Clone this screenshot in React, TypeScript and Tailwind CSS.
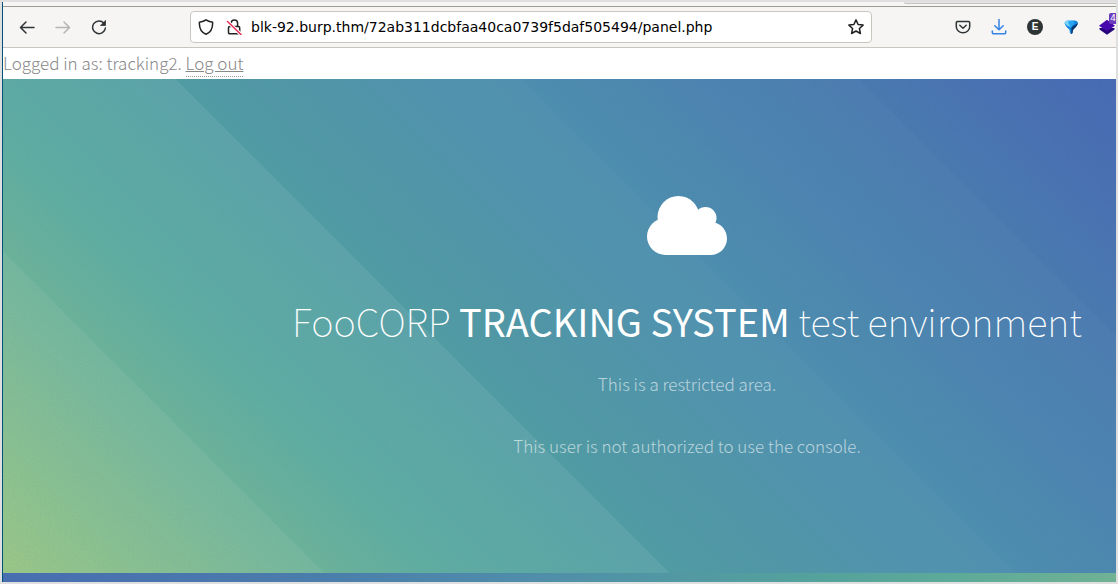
import React from 'react'

const iconProps = {
  width: 16,
  height: 16,
  viewBox: '0 0 16 16',
  fill: 'none',
  stroke: 'currentColor',
  strokeWidth: 1.5,
  strokeLinecap: 'round' as const,
  strokeLinejoin: 'round' as const,
  'aria-hidden': true,
}

function IconButton({ label, className = '', children }: { label: string; className?: string; children: React.ReactNode }) {
  return (
    <button type="button" aria-label={label} className={`h-4 w-4 shrink-0 ${className}`}>
      {children}
    </button>
  )
}

function Toolbar() {
  return (
    <nav aria-label="Browser toolbar" className="flex h-[42px] items-center border-t border-b border-t-[#9b9b91] border-b-[#c9c6bf] bg-[#f6f5f4] pl-4 text-[#2e3436]">
      <div className="flex items-center gap-5">
        <IconButton label="Back">
          <svg {...iconProps}><path d="M15 8.5H1.8M7 3L1.5 8.5L7 14" /></svg>
        </IconButton>
        <IconButton label="Forward" className="text-[#b4b5b4]">
          <svg {...iconProps}><path d="M1 8.5h13.2M9 3l5.5 5.5L9 14" /></svg>
        </IconButton>
        <IconButton label="Reload">
          <svg {...iconProps}>
            <path d="M12.8 4A6.4 6.4 0 1 0 14.4 9" />
            <path d="M14.5 1.8v4.7H9.8z" fill="currentColor" strokeWidth={0.8} />
          </svg>
        </IconButton>
      </div>

      {/* Address bar */}
      <div className="mr-[83px] ml-[83px] flex h-8 min-w-0 flex-1 items-center rounded-[4px] border border-[#c9c6bf] bg-white px-[7px] text-[#222]">
        <IconButton label="Tracking protection">
          <svg {...iconProps}><path d="M8 .8C6.500 2 4 2.800 1.400 3.200c-.3 5.300 1.200 9.800 6.600 12 5.400-2.200 6.900-6.700 6.600-12C12 2.800 9.500 2 8 .8z" /></svg>
        </IconButton>
        <IconButton label="Connection is not secure" className="ml-3">
          <svg {...iconProps}>
            <path d="M5.200 7V4.300a3.200 3.200 0 0 1 6.400 0V7M3.700 7.500h8.800a1.200 1.200 0 0 1 1.200 1.200v4.800a1.200 1.200 0 0 1-1.200 1.200H3.700a1.200 1.200 0 0 1-1.200-1.200V8.700a1.200 1.200 0 0 1 1.200-1.200z" />
            <path d="M1.500 2.500L15 15.500" stroke="#fff" strokeWidth={3.500} />
            <path d="M1.500 2.500L15 15.500" stroke="#ee2a55" />
          </svg>
        </IconButton>
        <input
          type="text"
          aria-label="Address"
          defaultValue="blk-92.burp.thm/72ab311dcbfaa40ca0739f5daf505494/panel.php"
          className="ml-[9px] h-6 min-w-0 flex-1 bg-transparent font-['DejaVu_Sans',sans-serif] text-[14px] font-normal text-black outline-none"
        />
        <IconButton label="Bookmark this page">
          <svg {...iconProps}><path d="M8 .9l2.100 4.600 5 .6-3.700 3.400 1 5L8 12l-4.400 2.500 1-5L.9 6.100l5-.6z" /></svg>
        </IconButton>
      </div>

      {/* Extensions */}
      <div className="flex items-center gap-5">
        <IconButton label="Save to Pocket">
          <svg {...iconProps}>
            <path d="M2.500 2.500h11a1.200 1.200 0 0 1 1.200 1.200v4A6.700 6 0 0 1 1.300 7.700v-4a1.200 1.200 0 0 1 1.200-1.200z" />
            <path d="M4.800 6.200L8 9.200l3.200-3" />
          </svg>
        </IconButton>
        <IconButton label="Downloads" className="text-[#3584e4]">
          <svg {...iconProps}><path d="M8 .5v10M3.800 6.700L8 10.800l4.200-4.100M1.300 12v1.500a1.200 1.200 0 0 0 1.200 1.200h11a1.200 1.200 0 0 0 1.200-1.200V12" /></svg>
        </IconButton>
        <button type="button" aria-label="Extension E" className="flex h-4 w-4 shrink-0 items-center justify-center rounded-full bg-[#2e3436] font-['Liberation_Sans',sans-serif] text-[10px] leading-4 font-bold text-white">
          E
        </button>
        <IconButton label="Extension">
          <svg width="16" height="16" viewBox="0 0 16 16" aria-hidden="true">
            <path d="M1.500 4Q2.500 1.500 4.500 1.500h7.500Q14.500 1.500 15 4C14.500 7 11.500 9 10 11l-.5 3Q8.300 15.800 7 14l-.5-3C5 9 2 7 1.500 4z" fill="#1487dd" />
            <path d="M1.500 4Q2.500 1.500 4.500 1.500H9L7.500 8 4 6.500z" fill="#7ad4fb" />
            <path d="M15 4C14.500 7 11.500 9 10 11l-.5 3q-.6.900-1.200 1V8z" fill="#0a3570" />
            <path d="M5 3.500L8 9l3.800-5.500L9.500 2H6.500z" fill="#27a5f2" />
          </svg>
        </IconButton>
        <button type="button" aria-label="Wappalyzer, 4 detected" className="relative h-4 w-[17px] shrink-0">
          <svg width="17" height="16" viewBox="0 0 17 16" aria-hidden="true">
            <path d="M.5 9v1.500L8 15.700 15.500 10.500V9z" fill="#27057a" />
            <path d="M8 .8L16 6.800 8 12 0 6.800z" fill="#4608ad" />
          </svg>
          <span className="absolute -top-[6px] right-0 rounded-l-[2px] bg-[#6b3bbd] pl-px font-['DejaVu_Sans',sans-serif] text-[9px] leading-[11px] font-normal text-white">
            4
          </span>
        </button>
      </div>
    </nav>
  )
}

// Fine paper-like texture laid over the gradients
function Grain() {
  return (
    <svg className="absolute inset-0 h-full w-full opacity-15" aria-hidden="true">
      <filter id="grain">
        <feTurbulence type="fractalNoise" baseFrequency="0.6" numOctaves="2" seed="4" />
        <feColorMatrix values="0 0 0 0 0.1  0 0 0 0 0.3  0 0 0 0 0.4  1.6 0 0 0 -0.5" />
      </filter>
      <rect width="100%" height="100%" filter="url(#grain)" />
    </svg>
  )
}

function Cloud() {
  return (
    <svg className="h-[59px] w-20" viewBox="0 0 80 59" fill="#fff" aria-hidden="true">
      <circle cx="31.500" cy="21" r="21" />
      <circle cx="58.500" cy="22" r="11" />
      <circle cx="18.500" cy="40.500" r="18.500" />
      <circle cx="63.500" cy="42.500" r="16.500" />
      <path d="M18.500 22H60l4 12v25H18.500z" />
    </svg>
  )
}

export default function App() {
  return (
    <div className="min-h-screen bg-[#dfdfdf] p-[2px]">
      <div className="flex min-h-[calc(100vh-4px)] flex-col overflow-hidden border-l border-[#00527a] bg-white font-['Noto_Sans_CJK_SC','Source_Sans_Pro',sans-serif] font-light">
        <div className="flex h-1 justify-end bg-[#f6f5f4]">
          <div className="h-[2px] w-[212px] rounded-bl-[4px] border-b border-[#c4c3c1] bg-[#e6e5e4]" />
        </div>
        <Toolbar />

        <p className="pb-[2px] text-[17px] leading-[29px] text-[#888]">
          Logged in as: tracking2.{' '}
          <a href="#logout" className="border-b border-dotted border-[#999] pb-px underline">Log out</a>
        </p>

        <section className="relative bg-[linear-gradient(45deg,transparent_0%,rgba(255,255,255,0.06)_20%,transparent_20%,rgba(255,255,255,0.07)_41.5%,transparent_41.5%,rgba(255,255,255,0.02)_63%,transparent_63%,rgba(255,255,255,0.02)_84%,transparent_84%),linear-gradient(45deg,#9cc885_0%,#5cab9f_27%,#52a0a2_38%,#5097a5_46%,#4e90ae_60%,#4a82af_74%,#4975b0_87%,#4768b4_100%)] pt-[117px] pb-[112px] pl-[255px]">
          <Grain />
          <div className="relative flex flex-col items-center text-center text-[17px] leading-[31px] text-white/60">
            <Cloud />
            <h1 className="mt-9 text-[38px] leading-[60px] font-thin whitespace-nowrap text-white">
              FooCORP <strong className="font-normal">TRACKING SYSTEM</strong> test environment
            </h1>
            <p className="mt-[17px]">This is a restricted area.</p>
            <p className="mt-[31px]">This user is not authorized to use the console.</p>
          </div>
        </section>

        <section aria-label="Console" className="relative min-h-[9px] flex-1 bg-[linear-gradient(90deg,#486cb1_0%,#4a7cab_28%,#4f8bab_45%,#54a29c_72%,#5dab98_85%,#71b393_100%)]">
          <Grain />
        </section>
      </div>
    </div>
  )
}
